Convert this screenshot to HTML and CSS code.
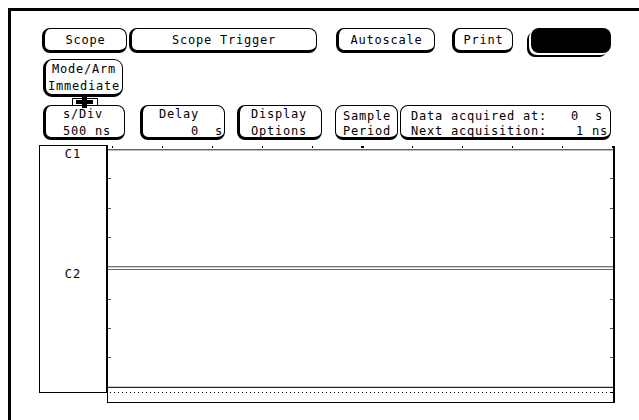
FILE: index.html
```html
<!DOCTYPE html>
<html lang="en">
<head>
    <meta charset="UTF-8">
    <meta name="viewport" content="width=device-width, initial-scale=1.0">
    <title>Scope</title>
    <link rel="stylesheet" href="styles.css">
</head>
<body>
    <div class="screen">

        <div class="menu-row">
            <div class="key k-scope">Scope</div>
            <div class="key k-trigger">Scope Trigger</div>
            <div class="key k-auto">Autoscale</div>
            <div class="key k-print">Print</div>
            <div class="key-dark"></div>
        </div>

        <div class="arm-row">
            <div class="key two-line k-arm">Mode/Arm<br>Immediate</div>
        </div>

        <div class="field-row">
            <div class="key two-line left k-sdiv">s/Div<br>500 ns</div>
            <div class="key two-line left k-delay">Delay<br>    0  s</div>
            <div class="key two-line left k-display">Display<br>Options</div>
            <div class="key two-line left k-sample">Sample<br>Period</div>
            <div class="key two-line left k-data">
                <div>Data acquired at:   0  s</div>
                <div>Next acquisition:   <span class="next-val">1 ns</span></div>
            </div>
        </div>

        <!-- little link between Mode/Arm and s/Div -->
        <svg class="arm-link" width="27" height="12" viewBox="0 0 27 12">
            <path d="M0.5 8 V1.5 H25.5 V8" fill="none" stroke="#000" stroke-width="1"/>
            <rect x="4" y="3" width="17" height="4" fill="#000"/>
            <rect x="10" y="0" width="5" height="11" fill="#000"/>
        </svg>

        <div class="scope-area">
            <div class="channels">
                <span class="ch1">C1</span>
                <span class="ch2">C2</span>
            </div>
            <svg class="plot" width="511" height="262" viewBox="0 0 511 262">
                <!-- top ticks -->
                <g fill="#000">
                    <rect x="6" y="2" width="1" height="2"/>
                    <rect x="56" y="2" width="1" height="2"/>
                    <rect x="106" y="2" width="1" height="2"/>
                    <rect x="156" y="2" width="1" height="2"/>
                    <rect x="206" y="2" width="1" height="2"/>
                    <rect x="255" y="2" width="3" height="2"/>
                    <rect x="306" y="2" width="1" height="2"/>
                    <rect x="356" y="2" width="1" height="2"/>
                    <rect x="406" y="2" width="1" height="2"/>
                    <rect x="456" y="2" width="1" height="2"/>
                    <rect x="506" y="2" width="1" height="2"/>
                </g>
                <!-- top edge -->
                <line x1="2" y1="5.5" x2="507" y2="5.5" stroke="#666"/>
                <line x1="2" y1="6.5" x2="507" y2="6.5" stroke="#bbb"/>

                <!-- side ticks -->
                <g stroke="#555">
                    <line x1="2" y1="34.5" x2="5" y2="34.5"/>
                    <line x1="2" y1="64.5" x2="5" y2="64.5"/>
                    <line x1="2" y1="93.5" x2="5" y2="93.5"/>
                    <line x1="2" y1="155.5" x2="5" y2="155.5"/>
                    <line x1="2" y1="184.5" x2="5" y2="184.5"/>
                    <line x1="2" y1="213.5" x2="5" y2="213.5"/>
                    <line x1="504" y1="34.5" x2="507" y2="34.5"/>
                    <line x1="504" y1="64.5" x2="507" y2="64.5"/>
                    <line x1="504" y1="93.5" x2="507" y2="93.5"/>
                    <line x1="504" y1="155.5" x2="507" y2="155.5"/>
                    <line x1="504" y1="184.5" x2="507" y2="184.5"/>
                    <line x1="504" y1="213.5" x2="507" y2="213.5"/>
                </g>

                <!-- C2 trace -->
                <line x1="2" y1="122.5" x2="507" y2="122.5" stroke="#777"/>
                <line x1="2" y1="123.5" x2="507" y2="123.5" stroke="#ccc"/>
                <line x1="2" y1="125.5" x2="507" y2="125.5" stroke="#666"/>

                <!-- bottom band -->
                <line x1="2" y1="242.5" x2="507" y2="242.5" stroke="#ccc"/>
                <line x1="2" y1="243.5" x2="507" y2="243.5" stroke="#222"/>
                <line x1="4" y1="248.5" x2="504" y2="248.5" stroke="#000" stroke-dasharray="1 3"/>
                <line x1="504" y1="248.5" x2="507" y2="248.5" stroke="#000"/>
                <line x1="1.5" y1="248" x2="1.5" y2="259" stroke="#000"/>
                <line x1="1" y1="258.5" x2="509" y2="258.5" stroke="#000"/>

                <!-- frame sides -->
                <rect x="0" y="1" width="2" height="248" fill="#000"/>
                <rect x="507" y="2" width="2" height="257" fill="#000"/>
            </svg>
        </div>

    </div>
</body>
</html>
```

FILE: styles.css
```css
html, body {
    margin: 0;
    padding: 0;
    background-color: #fff;
    overflow: hidden;
}
.screen {
    position: relative;
    margin: 8px 0 0 8px;
    height: 420px;
    border-top: 3px solid #000;
    border-left: 3px solid #000;
    font-family: "DejaVu Sans Mono", monospace;
    font-size: 12px;
    letter-spacing: 0.78px;
    color: #000;
    -webkit-font-smoothing: antialiased;
}
.menu-row {
    display: flex;
    margin-top: 17px;
    padding-left: 31px;
    height: 25px;
}
.key {
    box-sizing: border-box;
    display: flex;
    align-items: center;
    justify-content: center;
    border: 1px solid #000;
    border-left-width: 3px;
    border-bottom-width: 3px;
    border-radius: 8px;
    background-color: #fff;
    white-space: pre;
}
.key-dark {
    box-sizing: border-box;
    width: 80px;
    margin-left: 18px;
    background-color: #000;
    border-radius: 8px;
    box-shadow: -2px 2px 0 0 #fff, -4px 4px 0 0 #000;
}
.k-scope { width: 85px; }
.k-trigger { width: 188px; margin-left: 2px; }
.k-auto { width: 99px; margin-left: 19px; }
.k-print { width: 61px; margin-left: 17px; }

.two-line {
    align-items: flex-start;
    line-height: 17px;
    text-align: center;
}
.two-line.left {
    justify-content: flex-start;
    text-align: left;
}

.arm-row {
    display: flex;
    margin-top: 6px;
    padding-left: 32px;
    height: 38px;
}
.k-arm {
    width: 80px;
    border-radius: 9px;
    padding-top: 1px;
}

.field-row {
    display: flex;
    margin-top: 8px;
    padding-left: 32px;
    height: 35px;
}
.k-sdiv { width: 82px; padding-left: 17px; }
.k-delay { width: 85px; margin-left: 15px; padding-left: 16px; }
.k-display { width: 85px; margin-left: 12px; padding-left: 11px; }
.k-sample { width: 63px; margin-left: 13px; border-left-width: 1px; padding-left: 7px; line-height: 15px; padding-top: 3px; }
.k-data {
    flex-direction: column;
    width: 211px;
    margin-left: 2px;
    border-left-width: 1px;
    padding-left: 10px;
    line-height: 15px;
    padding-top: 3px;
}
.next-val { margin-left: 5px; }

.arm-link {
    position: absolute;
    left: 61px;
    top: 86px;
}

.scope-area {
    display: flex;
    align-items: flex-start;
    margin-top: 4px;
    padding-left: 28px;
}
.channels {
    box-sizing: border-box;
    display: flex;
    flex-direction: column;
    align-items: center;
    width: 67px;
    height: 248px;
    margin-top: 1px;
    border: 1px solid #000;
    border-right: none;
}
.channels span {
    display: block;
    line-height: 12px;
    letter-spacing: 1px;
}
.ch1 { margin-top: 2px; }
.ch2 { margin-top: 108px; }
.plot {
    display: block;
}
```
